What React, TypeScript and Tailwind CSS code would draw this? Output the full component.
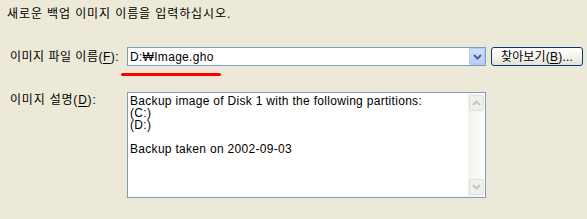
import React from "react";

const font = { fontFamily: '"Liberation Sans", "Noto Sans CJK KR", sans-serif' };

function Chevron({ up, color }: { up?: boolean; color: string }) {
  return (
    <svg width="9" height="6" viewBox="0 0 9 6">
      <path
        d={up ? "M1 5 L4.5 1.5 L8 5" : "M1 1 L4.5 4.5 L8 1"}
        fill="none"
        stroke={color}
        strokeWidth="2"
      />
    </svg>
  );
}

export default function App() {
  return (
    <div
      className="relative w-[587px] h-[219px] bg-[#ECE9D8] text-[12px] leading-[12px] text-black overflow-hidden"
      style={font}
    >
      <div className="pl-[7px] pt-[8px] h-[20px] tracking-[0.9px]">새로운 백업 이미지 이름을 입력하십시오.</div>

      <div className="flex items-center mt-[27px] h-[19px]">
        <div className="w-[127px] pl-[10px] tracking-[0.5px]">
          이미지 파일 이름(<span className="underline underline-offset-2">F</span>):
        </div>
        <div className="flex w-[359px] h-[19px] border border-[#7F9DB9] bg-white">
          <div className="flex-1 pl-[2px] flex items-center tracking-[0.3px]">D:₩Image.gho</div>
          <div className="w-[16px] h-[17px] flex items-center justify-center bg-gradient-to-b from-[#D4E0FD] to-[#B7CBF9] border border-[#B5C8F7] rounded-[1px]">
            <Chevron color="#4D6185" />
          </div>
        </div>
        <div className="ml-[5px] w-[92px] h-[19px] flex items-center justify-center border border-[#003C74] rounded-[3px] bg-gradient-to-b from-white via-[#F4F3EE] to-[#E3E1D7] tracking-[0.2px]">
          찾아보기(<span className="underline underline-offset-2">B</span>)...
        </div>
      </div>

      <div className="absolute left-[121px] top-[73px] w-[100px] h-[3px] rounded-full bg-[#FF0000]" />

      <div className="flex mt-[26px]">
        <div className="w-[127px] pl-[10px] pt-[2px] tracking-[0.8px]">
          이미지 설명(<span className="underline underline-offset-2">D</span>):
        </div>
        <div className="flex w-[359px] h-[106px] border border-[#7F9DB9] bg-white">
          <div className="flex-1 pl-[2px] pt-[2px] leading-[12px] tracking-[0.3px]">
            <div>Backup image of Disk 1 with the following partitions:</div>
            <div>(C:)</div>
            <div>(D:)</div>
            <div>&nbsp;</div>
            <div>Backup taken on 2002-09-03</div>
          </div>
          <div className="w-[17px] flex flex-col justify-between bg-gradient-to-r from-[#F3F1EA] to-[#FEFEFB] py-[2px]">
            <div className="h-[16px] mx-px flex items-center justify-center bg-[#F1F0EA] border border-[#E2E0D6] rounded-[2px]">
              <Chevron up color="#C9C7BA" />
            </div>
            <div className="h-[16px] mx-px flex items-center justify-center bg-[#F1F0EA] border border-[#E2E0D6] rounded-[2px]">
              <Chevron color="#C9C7BA" />
            </div>
          </div>
        </div>
      </div>
    </div>
  );
}
